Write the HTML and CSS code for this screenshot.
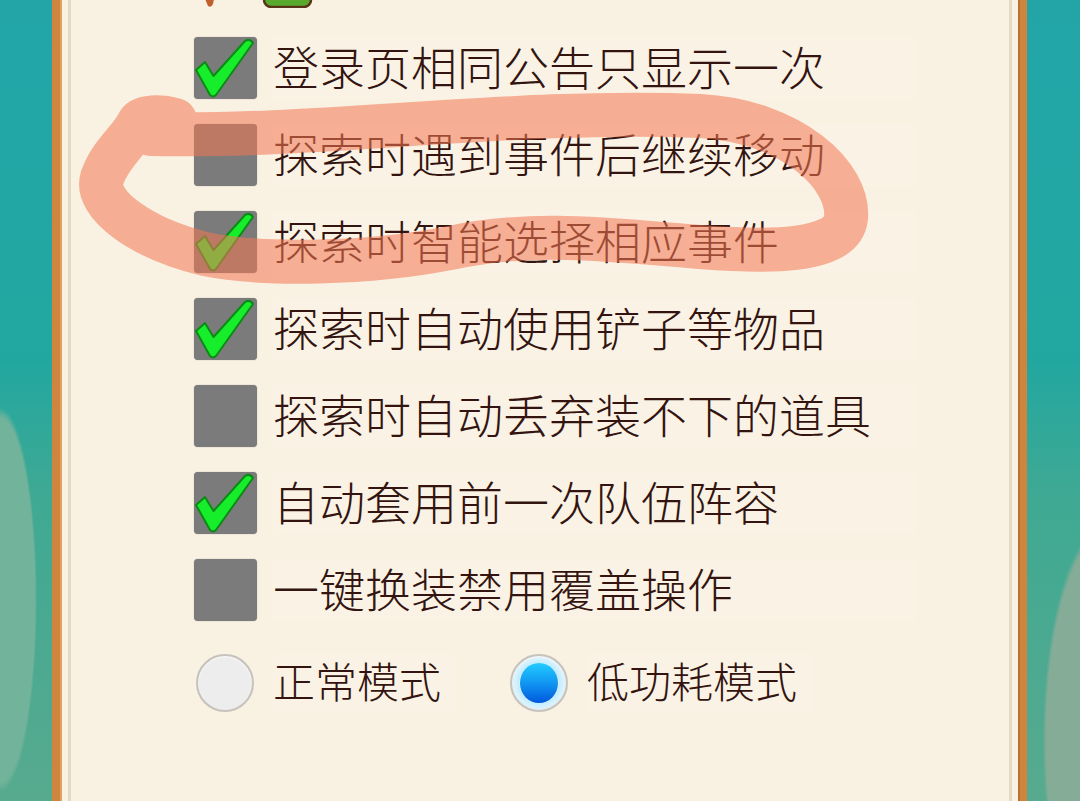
FILE: index.html
```html
<!DOCTYPE html>
<html lang="zh-CN">
<head>
    <meta charset="UTF-8">
    <meta name="viewport" content="width=device-width, initial-scale=1.0">
    <title>设置</title>
    <link rel="stylesheet" href="styles.css">
</head>
<body>
    <div class="frame">
        <div class="inner">
            <!-- bottom edge of the row above, cut off by the scroll -->
            <div class="prev-row">
                <svg width="140" height="8" viewBox="0 0 140 8">
                    <path d="M10 -6 L22 -6 L20 4 Q18 8 15 6 Z" fill="#c0602c"/>
                    <rect x="71" y="-14" width="47" height="21" rx="7" fill="#5aa92f" stroke="#5a3416" stroke-width="2.5"/>
                </svg>
            </div>

            <ul class="options">
                <li class="option checked"><span class="box"></span><span class="label">登录页相同公告只显示一次</span></li>
                <li class="option"><span class="box"></span><span class="label">探索时遇到事件后继续移动</span></li>
                <li class="option checked"><span class="box"></span><span class="label">探索时智能选择相应事件</span></li>
                <li class="option checked"><span class="box"></span><span class="label">探索时自动使用铲子等物品</span></li>
                <li class="option"><span class="box"></span><span class="label">探索时自动丢弃装不下的道具</span></li>
                <li class="option checked"><span class="box"></span><span class="label">自动套用前一次队伍阵容</span></li>
                <li class="option"><span class="box"></span><span class="label">一键换装禁用覆盖操作</span></li>
            </ul>

            <div class="modes">
                <div class="mode first"><span class="radio"></span><span class="mode-label">正常模式</span></div>
                <div class="mode"><span class="radio on"></span><span class="mode-label">低功耗模式</span></div>
            </div>
        </div>
    </div>

    <!-- hand-drawn highlight over rows 2 and 3 -->
    <svg class="scribble" width="1080" height="801" viewBox="0 0 1080 801">
        <path d="M150 134 C320 138 520 108 700 116 C792 121 850 176 846 218 C842 254 764 252 700 247 C610 240 530 230 450 248 C370 264 262 266 205 254 C140 238 94 204 102 178 C110 154 130 140 138 124 C142 116 160 116 175 120"
              fill="none" stroke="rgba(242,120,84,0.56)" stroke-width="44" stroke-linecap="round" stroke-linejoin="round"/>
    </svg>
</body>
</html>
```

FILE: styles.css
```css
body {
    margin: 0;
    height: 801px;
    overflow: hidden;
    font-family: "Noto Sans CJK SC", "Noto Sans", sans-serif;
    font-weight: 300;
    color: #341410;
    background:
        radial-gradient(ellipse 50px 260px at 0px 600px, #72b39b 0%, #72b39b 70%, transparent 74%),
        radial-gradient(ellipse 80px 260px at 1110px 740px, #84ac97 0%, #84ac97 80%, transparent 84%),
        linear-gradient(to bottom, #23a5a8 0%, #22a7a0 45%, #3fa993 62%, #57aa8e 100%);
    position: relative;
}

.frame {
    height: 801px;
    margin: 0 53px 0 52px;
    padding: 0 8px;
    box-sizing: border-box;
    background-color: #f9f2e3;
    border-left: 8px solid #d0853f;
    border-right: 7px solid #d0853f;
    box-shadow: inset 2px 0 0 #e3a160, inset -2px 0 0 #b9712f;
}

.inner {
    height: 100%;
    border-left: 3px solid #e4d9c5;
    border-right: 3px solid #e4d9c5;
}

.prev-row {
    height: 8px;
    padding-left: 122px;
    overflow: hidden;
}

.prev-row svg {
    display: block;
}

.options {
    list-style: none;
    margin: 29px 0 0;
    padding: 0 0 0 123px;
    display: flex;
    flex-direction: column;
    gap: 25px;
}

.option {
    display: flex;
    align-items: center;
    gap: 16px;
    height: 62px;
}

.box {
    flex: 0 0 63px;
    height: 62px;
    border-radius: 4px;
    background-color: #7b7b7b;
    box-shadow: 0 0 1px rgba(80, 80, 80, 0.6);
    position: relative;
}

.option.checked .box::after {
    content: "";
    position: absolute;
    inset: 0;
    background: url("data:image/svg+xml;utf8,<svg xmlns='http://www.w3.org/2000/svg' viewBox='0 0 63 62'><path d='M2 33 L11 25 L19.5 39 L51 4 Q56 1 59 6 L22 58 Q19 61 16 58 Z' fill='%2316ee2c' stroke='%230d8a16' stroke-width='2' stroke-linejoin='round'/></svg>") no-repeat center / 100% 100%;
}

.label {
    width: 642px;
    height: 62px;
    box-sizing: border-box;
    padding-bottom: 6px;
    font-size: 46px;
    line-height: 56px;
    white-space: nowrap;
    background-color: #faf3e5;
}

.modes {
    display: flex;
    margin: 33px 0 0;
    padding-left: 125px;
}

.mode {
    display: flex;
    align-items: center;
    gap: 19px;
}

.mode.first {
    width: 314px;
}

.radio {
    width: 54px;
    height: 54px;
    border-radius: 50%;
    border: 2px solid #c6c3bd;
    background-color: #ededed;
    box-shadow: inset 0 1px 2px rgba(255, 255, 255, 0.8);
}

.radio.on {
    background: radial-gradient(circle, transparent 0, transparent 19px, #c2ecff 20px, #d9f3ff 25px, #e8e8e8 27px);
    position: relative;
}

.radio.on::after {
    content: "";
    position: absolute;
    left: 8px;
    top: 7px;
    width: 38px;
    height: 40px;
    border-radius: 50%;
    background: linear-gradient(to bottom, #22cdff 0%, #1196f2 50%, #0058dc 100%);
}

.mode-label {
    font-size: 42px;
    line-height: 52px;
    padding-bottom: 6px;
    white-space: nowrap;
    padding-right: 14px;
    background-color: #faf3e5;
}

.scribble {
    position: absolute;
    top: 0;
    left: 0;
    pointer-events: none;
}
```
